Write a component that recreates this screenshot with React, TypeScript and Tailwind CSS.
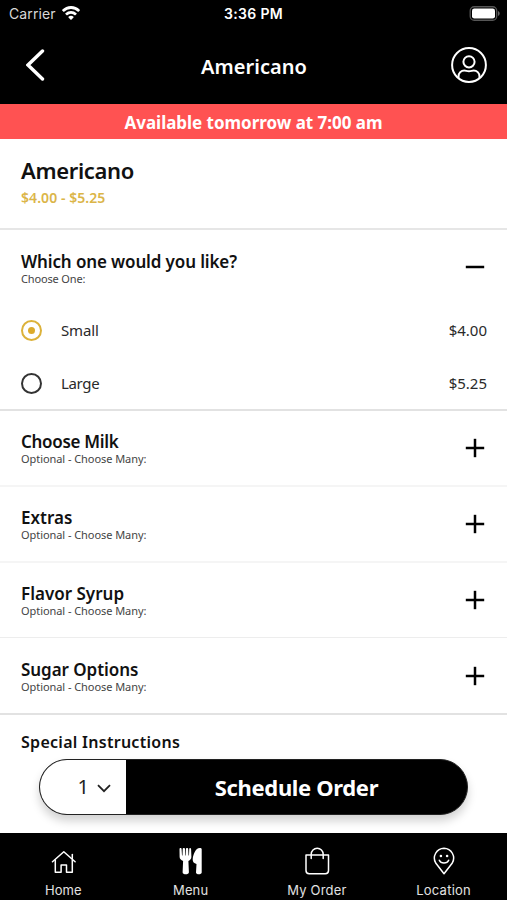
import type { ReactNode } from "react";
import clsx from "clsx";

type OptionGroup = {
  name: string;
  hint: string;
  nameClass: string;
  rowClass: string;
};

type Choice = {
  label: string;
  price: string;
  selected: boolean;
  labelClass: string;
};

const CHOICES: Choice[] = [
  { label: "Small", price: "$4.00", selected: true, labelClass: "tracking-[-0.15px]" },
  { label: "Large", price: "$5.25", selected: false, labelClass: "tracking-[-0.35px]" },
];

const OPTION_GROUPS: OptionGroup[] = [
  {
    name: "Choose Milk",
    hint: "Optional - Choose Many:",
    nameClass: "tracking-[-0.3px]",
    rowClass: "h-[76px] border-b-2 border-[#f5f5f5]",
  },
  {
    name: "Extras",
    hint: "Optional - Choose Many:",
    nameClass: "tracking-[0px]",
    rowClass: "h-[76px] border-b-2 border-[#f5f5f5]",
  },
  {
    name: "Flavor Syrup",
    hint: "Optional - Choose Many:",
    nameClass: "tracking-[0px]",
    rowClass: "h-[75px] border-b border-[#ededed]",
  },
  {
    name: "Sugar Options",
    hint: "Optional - Choose Many:",
    nameClass: "tracking-[-0.05px]",
    rowClass: "h-[77px] border-b-2 border-[#e2e2e2]",
  },
];

function WifiIcon() {
  return (
    <svg width="18" height="14" viewBox="0 0 18 13" preserveAspectRatio="none" fill="#fff">
      <path d="M9 0C5.600 0 2.500 1.300.2 3.500a.4.4 0 0 0 0 .6l1.300 1.300c.2.2.4.2.6 0A10 10 0 0 1 9 2.800a10 10 0 0 1 6.900 2.600c.2.2.4.2.6 0l1.300-1.300a.4.4 0 0 0 0-.6A12.700 12.700 0 0 0 9 0z" />
      <path d="M9 4.600a8.200 8.200 0 0 0-5.600 2.200.4.4 0 0 0 0 .6l1.300 1.300c.2.2.4.2.6 0a5.500 5.500 0 0 1 7.400 0c.2.2.4.2.6 0l1.300-1.300a.4.4 0 0 0 0-.6A8.200 8.200 0 0 0 9 4.600z" />
      <path d="M9 9c-1 0-1.900.4-2.500 1a.4.4 0 0 0 0 .6l2.200 2.200c.2.2.4.2.6 0l2.200-2.200a.4.4 0 0 0 0-.6A3.600 3.600 0 0 0 9 9z" />
    </svg>
  );
}

function BatteryIcon() {
  return (
    <svg width="31" height="15" viewBox="0 0 31 15">
      <rect x="1.200" y=".75" width="26.500" height="13.500" rx="4" fill="none" stroke="#565656" strokeWidth="1.300" />
      <rect x="3" y="2.500" width="23" height="10" rx="2.300" fill="#fff" />
      <path d="M29 5v5c1-.4 1.700-1.400 1.700-2.500S30 5.400 29 5z" fill="#666" />
    </svg>
  );
}

function ProfileIcon() {
  return (
    <svg width="36" height="36" viewBox="0 0 36 36" fill="none" stroke="#fff" strokeWidth="2">
      <circle cx="18" cy="18" r="16.900" />
      <circle cx="18" cy="14.800" r="5.600" />
      <path d="M7.500 31v-1.500c0-3.600 2.700-6 5.800-6 1.700 0 2.600.8 4.700.8s3-.8 4.700-.8c3.100 0 5.800 2.400 5.800 6V31" />
    </svg>
  );
}

function HomeIcon() {
  return (
    <svg width="26" height="28" viewBox="0 0 26 28" fill="none" stroke="#fff" strokeWidth="1.500" strokeLinejoin="round" strokeLinecap="round">
      <path d="M2.500 14.700 13.800 4.700l11.300 10" />
      <path d="M5.300 13v12.200h5.800V18h5.400v7.200h5.800V13" />
      <path d="M22.300 11.500v-4" />
    </svg>
  );
}

function MenuIcon() {
  return (
    <svg width="26" height="28" viewBox="0 0 26 28" fill="#fff">
      <path d="M3.500.9c.7 0 1.100.4 1.100 1.100L5 8.300c0 .4.500.4.500 0L5.700 2c.1-1.400 2.200-1.400 2.300 0l.1 6.300c0 .4.500.4.500 0L8.900 2c.1-1.400 2.200-1.400 2.300 0l.3 6.300c0 .4.500.4.500 0l.2-5.900c.1-1.700 1.700-1.800 1.900-.2l.3 7.600c0 2-1.100 3.400-3 4.200l.5 11.300c0 2.700-6.400 2.700-6.300 0l.5-11.300c-2-.8-3.600-2.200-3.500-4.200L2.500 2c0-.7.400-1.100 1-1.100z" />
      <path d="M24.700 2.300v23.100c0 2.400-5.800 2.400-5.700 0l.5-8.400c-2.500-.6-3.900-2.200-3.800-4.500.2-4.900 3-11.500 7-11.500 1.300 0 2 .4 2 1.300z" />
    </svg>
  );
}

function BagIcon() {
  return (
    <svg width="26" height="28" viewBox="0 0 26 28" fill="none" stroke="#fff" strokeWidth="1.500" strokeLinecap="round" strokeLinejoin="round">
      <path d="M2 8h22.500v15.500a3.200 3.200 0 0 1-3.200 3.200H5.200A3.200 3.200 0 0 1 2 23.500V8z" />
      <path d="M7.200 11.500V7.300a6 6 0 0 1 12 0v4.200" />
    </svg>
  );
}

function LocationIcon() {
  return (
    <svg width="26" height="28" viewBox="0 0 26 28" fill="none" stroke="#fff" strokeWidth="1.500" strokeLinecap="round" strokeLinejoin="round">
      <path d="M13 26.700 4.700 16A9.900 9.900 0 0 1 13 1.200 9.900 9.900 0 0 1 21.300 16L13 26.700z" />
      <path d="M8.300 13.300c.8 1.700 2.500 2.800 4.700 2.800s3.900-1.100 4.700-2.800" />
      <circle cx="9.900" cy="9" r="1.300" fill="#fff" stroke="none" />
      <circle cx="16.100" cy="9" r="1.300" fill="#fff" stroke="none" />
    </svg>
  );
}

function ToggleIcon({ open }: { open?: boolean }) {
  return (
    <svg width="20" height="20" viewBox="0 0 20 20" stroke="#000" strokeWidth="2.500">
      <path d="M.8 10h18.400" />
      {!open && <path d="M10 .8v18.400" />}
    </svg>
  );
}

function Radio({ selected }: { selected: boolean }) {
  return (
    <span
      className={clsx(
        "flex size-[21px] items-center justify-center rounded-full border-2",
        selected ? "border-[#dcb23a]" : "border-[#333]",
      )}
    >
      {selected && <span className="size-[7px] rounded-full bg-[#dcab2c]" />}
    </span>
  );
}

function Tab({ label, labelClass, children }: { label: string; labelClass: string; children: ReactNode }) {
  return (
    <a className="flex flex-1 flex-col items-center pt-[14px]">
      {children}
      <span
        className={clsx(
          "mt-[7px] font-['Inter',sans-serif] text-[13px] leading-4 whitespace-nowrap text-[#e2e2e2]",
          labelClass,
        )}
      >
        {label}
      </span>
    </a>
  );
}

export default function App() {
  return (
    <div className="relative flex h-[900px] w-[507px] flex-col overflow-hidden bg-white font-['Noto_Sans',sans-serif] text-[#111]">
      <header className="h-[104px] shrink-0 bg-black text-white">
        <div className="grid h-[26px] grid-cols-3 items-center pr-[7px] pl-[9px] font-['Inter',sans-serif] text-[14px]">
          <div className="flex items-center gap-[6px] text-[#d8d8d8]">
            <span className="pt-px tracking-[0.1px]">Carrier</span>
            <WifiIcon />
          </div>
          <span className="pt-px pr-[2px] text-center font-semibold tracking-[0.35px]">3:36 PM</span>
          <div className="flex justify-end">
            <BatteryIcon />
          </div>
        </div>
        <div className="flex h-[78px] items-center justify-between pr-5 pl-[26px]">
          <svg className="mr-[12px]" width="19" height="32" viewBox="0 0 19 32" fill="none" stroke="#fff" strokeWidth="3.400" strokeLinecap="round">
            <path d="M16.500 2 2 16l14.500 14" />
          </svg>
          <h1 className="mt-[3px] text-[20px] font-semibold tracking-[0.05px]">Americano</h1>
          <ProfileIcon />
        </div>
      </header>

      <div className="flex h-[35px] shrink-0 items-center justify-center bg-[#ff5252] pt-0.5 text-[17px] font-bold tracking-[-0.03px] text-white">
        Available tomorrow at 7:00 am
      </div>

      <section className="h-[91px] shrink-0 border-b-2 border-[#e6e6e6] pt-[17px] pl-[21px]">
        <h2 className="text-[22px] leading-7 font-semibold tracking-[-0.35px]">Americano</h2>
        <p className="mt-1 text-[14px] leading-5 font-semibold tracking-[0.06px] text-[#dbb548]">$4.00 - $5.25</p>
      </section>

      <section className="h-[181px] shrink-0 border-b-2 border-[#e2e2e2] pr-5 pl-[21px]">
        <div className="flex h-[74px] items-center justify-between pr-0.5">
          <div className="pt-[3px]">
            <h3 className="text-[17px] leading-5 font-semibold tracking-[-0.13px]">Which one would you like?</h3>
            <p className="text-[11px] leading-[14px] tracking-[-0.15px] text-[#444]">Choose One:</p>
          </div>
          <ToggleIcon open />
        </div>
        {CHOICES.map((choice) => (
          <div key={choice.label} className="flex h-[53px] items-center text-[15px] text-[#2a2a2a]">
            <Radio selected={choice.selected} />
            <span className={clsx("ml-[19px] flex-1", choice.labelClass)}>{choice.label}</span>
            <span>{choice.price}</span>
          </div>
        ))}
      </section>

      {OPTION_GROUPS.map((group) => (
        <section
          key={group.name}
          className={clsx("flex shrink-0 items-center justify-between pr-[22px] pl-[21px]", group.rowClass)}
        >
          <div className="pt-0.5">
            <h3 className={clsx("text-[17px] leading-5 font-semibold", group.nameClass)}>{group.name}</h3>
            <p className="text-[11px] leading-[14px] tracking-[-0.06px] text-[#444]">{group.hint}</p>
          </div>
          <ToggleIcon />
        </section>
      ))}

      <section className="flex-1 pt-4 pl-[21px]">
        <h3 className="text-[16px] leading-[22px] font-semibold tracking-[0.28px]">Special Instructions</h3>
      </section>

      <div className="absolute top-[759px] left-[39px] flex h-14 w-[429px] overflow-hidden rounded-full border-[1.5px] border-[#222] bg-black shadow-[0_6px_10px_rgba(0,0,0,0.18)]">
        <button className="flex w-[86px] items-center justify-end gap-2 bg-white pr-[15px] text-[20px] text-[#222]">
          1
          <svg className="mt-0.5" width="14" height="9" viewBox="0 0 14 9" fill="none" stroke="#222" strokeWidth="1.800">
            <path d="m1 1.200 6 6 6-6" />
          </svg>
        </button>
        <button className="flex-1 text-[22px] font-bold tracking-[-0.35px] text-white">Schedule Order</button>
      </div>

      <nav className="flex h-[67px] shrink-0 bg-black">
        <Tab label="Home" labelClass="tracking-[0.1px]">
          <HomeIcon />
        </Tab>
        <Tab label="Menu" labelClass="pl-px tracking-[0.1px]">
          <MenuIcon />
        </Tab>
        <Tab label="My Order" labelClass="tracking-[0.2px]">
          <BagIcon />
        </Tab>
        <Tab label="Location" labelClass="tracking-[0.25px]">
          <LocationIcon />
        </Tab>
      </nav>
    </div>
  );
}
